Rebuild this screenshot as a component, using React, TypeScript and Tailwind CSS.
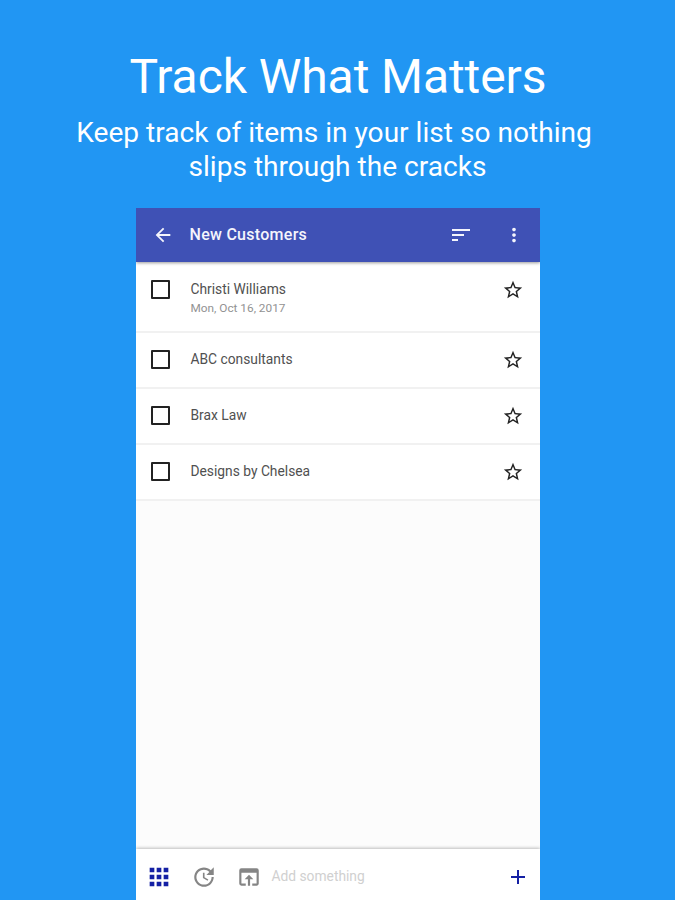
import { MdArrowBack, MdMoreVert, MdSort, MdStarBorder, MdApps, MdUpdate, MdOpenInBrowser, MdAdd } from "react-icons/md";

const items = [
  { name: "Christi Williams", date: "Mon, Oct 16, 2017" },
  { name: "ABC consultants" },
  { name: "Brax Law" },
  { name: "Designs by Chelsea" },
];

export function Header() {
  return (
    <header className="z-10 flex h-[54px] shrink-0 items-center bg-[#3f51b5] text-[#f4f5fc] shadow-[0_1px_3px_rgba(0,0,0,0.4)]">
      <MdArrowBack className="ml-4 size-[22px]" />
      <h2 className="ml-4 text-[16px] leading-6 font-medium tracking-[0.28px]">New Customers</h2>
      <MdSort className="ml-auto size-6" />
      <MdMoreVert className="mr-[15px] ml-[30px] size-[22px]" />
    </header>
  );
}

export function Item({ name, date }: { name: string; date?: string }) {
  return (
    <li
      className={`flex items-start border-b-2 border-[#f1f1f1] bg-white ${date ? "h-[71px] pt-[15px]" : "h-14 pt-3.5"}`}
    >
      <span className="mt-[3px] ml-[15px] size-[19px] shrink-0 rounded-[1px] border-2 border-[#222]" />
      <div className="ml-[21px]">
        <p className="text-[13.8px] leading-6 text-[#505050]">{name}</p>
        {date && <p className="text-[11.8px] leading-[15px] text-[#929292]">{date}</p>}
      </div>
      <MdStarBorder className="mt-[2px] mr-4 ml-auto size-[22px] text-[#222]" />
    </li>
  );
}

export function Footer() {
  return (
    <footer className="flex h-[51px] shrink-0 items-center bg-white pt-1 text-[#858585] shadow-[0_-1px_3px_rgba(0,0,0,0.25)]">
      <MdApps className="ml-[9px] size-7 text-[#1420a4]" />
      <MdUpdate className="ml-[18px] size-[26px]" />
      <MdOpenInBrowser className="ml-[19px] size-[26px]" />
      <span className="ml-2.5 text-[13.8px] text-[#d0d0d0]">Add something</span>
      <MdAdd className="mr-2.5 ml-auto size-6 text-[#1420a4]" />
    </footer>
  );
}

export default function App() {
  return (
    <main className="flex h-[900px] w-[675px] flex-col items-center overflow-hidden bg-[#2196f3] font-['Roboto',sans-serif] text-white">
      <h1 className="mt-12 ml-px text-[48px] leading-[58px] tracking-[-0.08px]">Track What Matters</h1>
      <p className="mt-2.5 text-center text-[28.1px] leading-[34px]">
        Keep track of items in your list so nothing&nbsp;
        <br />
        slips through the cracks
      </p>
      <section className="mt-6 flex w-[404px] grow flex-col overflow-hidden bg-[#fcfcfc]">
        <Header />
        <ul className="grow">
          {items.map((item) => (
            <Item key={item.name} {...item} />
          ))}
        </ul>
        <Footer />
      </section>
    </main>
  );
}
